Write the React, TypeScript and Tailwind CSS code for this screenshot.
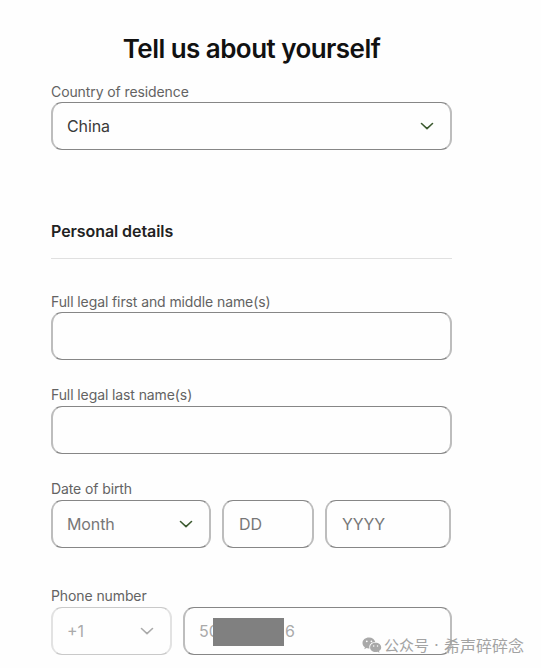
import React from "react";

const field =
  "flex h-12 items-center rounded-[11px] border-x-2 border-y border-x-[#bdbdbd] border-y-[#868686] text-[16px] tracking-[-0.1px]";
const disabled =
  "flex h-12 items-center rounded-[11px] border-x-2 border-y border-x-[#e2e2e2] border-y-[#c9c9c9] text-[16px]";

function Chevron({ color }: { color: string }) {
  return (
    <svg width="14" height="8" viewBox="0 0 14 8" fill="none" stroke={color} strokeWidth="1.6" strokeLinecap="round" strokeLinejoin="round">
      <path d="M1.5 1.500 7 6.600l5.500-5.100" />
    </svg>
  );
}

function Label({ children }: { children: React.ReactNode }) {
  return <div className="h-5 text-[14px] leading-5 tracking-[-0.1px] text-[#636363]">{children}</div>;
}

function WeChat() {
  return (
    <svg width="20" height="16" viewBox="0 0 20 16" fill="#a9a9a9">
      <path fillRule="evenodd" d="M7 .5C3.200.500.500 2.900.500 6c0 1.800.900 3.300 2.400 4.300L2.300 12.300l2.300-1.200c.900.300 1.700.400 2.900.300C6.500 7.900 9.300 5 13.300 5 12.700 2.400 10.200.500 7 .500ZM4.800 3.400a.9.9 0 1 1 0 1.800.9.9 0 0 1 0-1.800Zm4.600 0a.9.9 0 1 1 0 1.800.9.9 0 0 1 0-1.800Z" />
      <path fillRule="evenodd" d="M13.600 5.800c-3.100 0-5.500 2-5.500 4.600s2.400 4.600 5.500 4.600c.700 0 1.300-.100 1.900-.300l2 1-.500-1.700c1.400-.900 2.200-2.100 2.200-3.600 0-2.600-2.500-4.600-5.600-4.600Zm-1.900 2.400a.75.75 0 1 1 0 1.500.75.75 0 0 1 0-1.500Zm3.800 0a.75.75 0 1 1 0 1.500.75.75 0 0 1 0-1.500Z" />
    </svg>
  );
}

export default function App() {
  return (
    <div className="relative h-[668px] w-[541px] overflow-hidden bg-[#fefefe] pl-[51px] font-['Inter',sans-serif]">
      <main className="w-[401px] pt-8">
        <h1 className="h-[50px] text-center text-[26px] leading-[34px] font-semibold tracking-[-0.55px] text-[#111]">
          Tell us about yourself
        </h1>
        <Label>Country of residence</Label>
        <div className={`${field} justify-between pr-4 pl-[14px] text-[#3a3a3a]`}>
          China
          <Chevron color="#3c5a30" />
        </div>

        <h2 className="mt-[69px] h-10 border-b border-[#e0e0e0] text-[16px] leading-6 font-semibold tracking-[-0.07px] text-[#222]">
          Personal details
        </h2>

        <section className="mt-[33px]">
          <Label>Full legal first and middle name(s)</Label>
          <div className={field} />
        </section>
        <section className="mt-[25px]">
          <Label>Full legal last name(s)</Label>
          <div className={`${field} mt-px`} />
        </section>
        <section className="mt-[25px]">
          <Label>Date of birth</Label>
          <div className="mt-px flex gap-[11px] text-[#777]">
            <div className={`${field} w-[160px] justify-between pr-4 pl-[14px]`}>
              Month
              <Chevron color="#3c5a30" />
            </div>
            <div className={`${field} w-[92px] pl-[15px]`}>DD</div>
            <div className={`${field} w-[126px] pl-[15px]`}>YYYY</div>
          </div>
        </section>
        <section className="mt-[38px]">
          <Label>Phone number</Label>
          <div className="mt-px flex gap-[11px] text-[#aaa]">
            <div className={`${disabled} w-[121px] justify-between pr-4 pl-[14px]`}>
              +1
              <Chevron color="#aaaaaa" />
            </div>
            <div className={`${field} relative w-[269px] pl-[14px]`}>
              <span className="w-[86px]">50</span>
              <span>6</span>
              <span className="absolute top-[10px] left-7 h-7 w-[71px] bg-[#808080]" />
            </div>
          </div>
        </section>
      </main>

      <div className="absolute top-[634px] left-[362px] flex items-center font-['Noto_Sans_CJK_SC',sans-serif] text-[15px] leading-[22px] whitespace-nowrap text-[#a3a3a3]">
        <WeChat />
        <span className="ml-[2px]">公众号</span>
        <span className="w-[15px] text-center font-['Inter',sans-serif]">·</span>
        <span className="text-[16px]">希声碎碎念</span>
      </div>
    </div>
  );
}
